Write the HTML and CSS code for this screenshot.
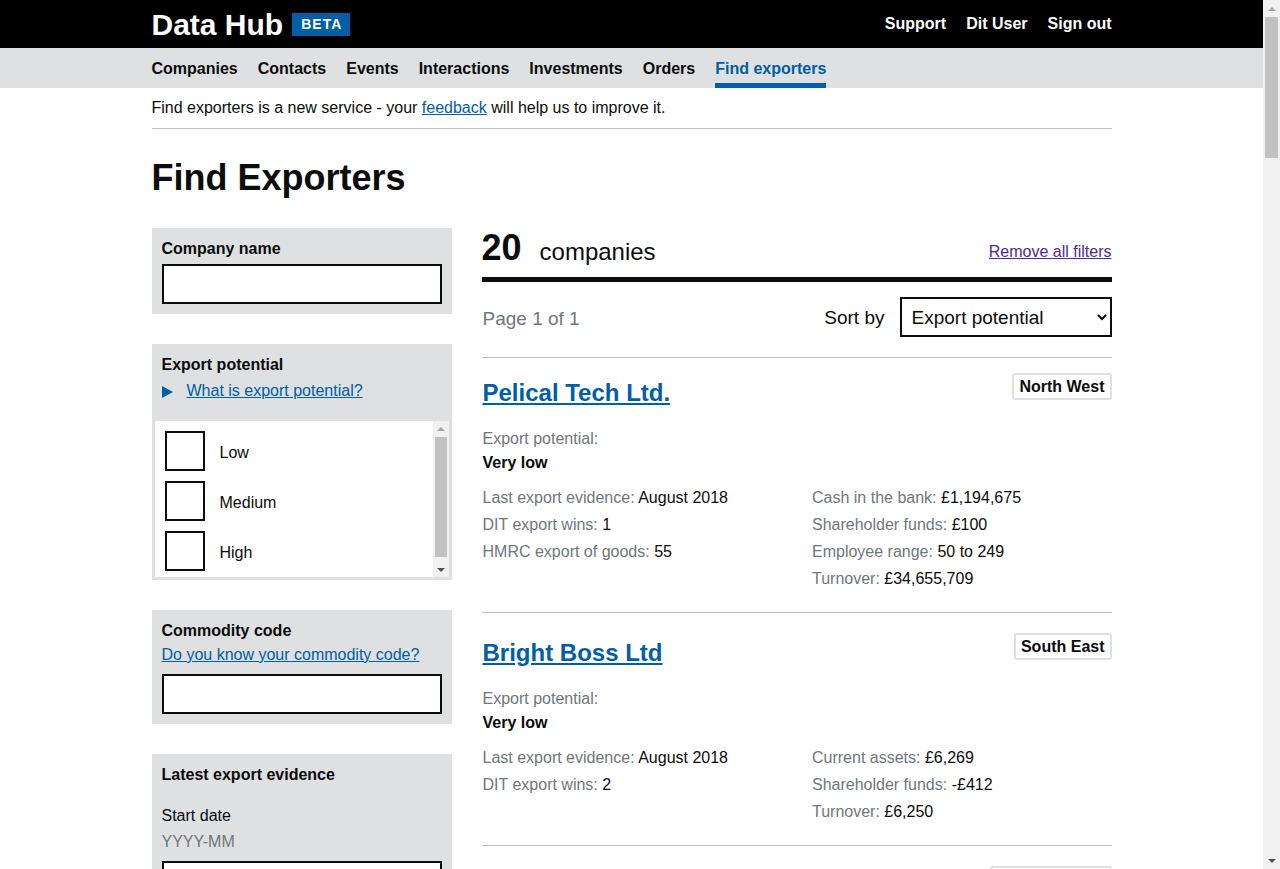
FILE: index.html
```html
<!DOCTYPE html>
<html lang="en">
<head>
<meta charset="utf-8">
<title>Find Exporters - Data Hub</title>
<link rel="stylesheet" href="styles.css">
</head>
<body>
<header class="site-header">
  <div class="container header-inner">
    <div class="brand">
      <a class="logo" href="#">Data Hub</a>
      <span class="beta">BETA</span>
    </div>
    <nav class="header-links">
      <a href="#">Support</a>
      <a href="#">Dit User</a>
      <a href="#">Sign out</a>
    </nav>
  </div>
</header>
<nav class="main-nav">
  <div class="container nav-inner">
    <a href="#">Companies</a>
    <a href="#">Contacts</a>
    <a href="#">Events</a>
    <a href="#">Interactions</a>
    <a href="#">Investments</a>
    <a href="#">Orders</a>
    <a href="#" class="active">Find exporters</a>
  </div>
</nav>
<main class="container">
  <p class="feedback">Find exporters is a new service - your <a href="#">feedback</a> will help us to improve it.</p>
  <h1 class="page-title">Find Exporters</h1>
  <div class="layout">
    <aside class="filters">
      <div class="filter">
        <label class="filter-label">Company name</label>
        <input class="text-input" type="text">
      </div>
      <div class="filter filter-options">
        <div class="filter-label">Export potential</div>
        <div class="summary">
          <svg class="triangle" width="11" height="12" viewBox="0 0 11 12"><polygon points="0,0 11,6 0,12" fill="#005ea5"/></svg>
          <a href="#">What is export potential?</a>
        </div>
        <div class="options">
          <div class="option-list">
            <label class="option"><input type="checkbox" class="checkbox"><span>Low</span></label>
            <label class="option"><input type="checkbox" class="checkbox"><span>Medium</span></label>
            <label class="option"><input type="checkbox" class="checkbox"><span>High</span></label>
          </div>
          <div class="mini-scrollbar" aria-hidden="true">
            <span class="sb-btn sb-up"></span>
            <span class="sb-track"><span class="sb-thumb mini-thumb"></span></span>
            <span class="sb-btn sb-down"></span>
          </div>
        </div>
      </div>
      <div class="filter">
        <div class="filter-label">Commodity code</div>
        <a class="filter-link" href="#">Do you know your commodity code?</a>
        <input class="text-input spaced" type="text">
      </div>
      <div class="filter">
        <div class="filter-label">Latest export evidence</div>
        <div class="date-label">Start date</div>
        <div class="hint">YYYY-MM</div>
        <input class="text-input spaced" type="text">
        <div class="date-label">End date</div>
        <div class="hint">YYYY-MM</div>
        <input class="text-input spaced" type="text">
      </div>
    </aside>
    <section class="results">
      <div class="results-header">
        <span class="count">20</span>
        <span class="count-label">companies</span>
        <a class="remove-filters" href="#">Remove all filters</a>
      </div>
      <div class="sort-row">
        <span class="page-info">Page 1 of 1</span>
        <div class="sort">
          <span class="sort-label">Sort by</span>
          <select class="sort-select">
            <option>Export potential</option>
            <option>Company name</option>
          </select>
        </div>
      </div>
      <div class="card-list">
        <article class="card">
          <div class="card-head">
            <a class="card-title" href="#">Pelical Tech Ltd.</a>
            <span class="badge">North West</span>
          </div>
          <div class="ep-label">Export potential:</div>
          <div class="ep-value">Very low</div>
          <div class="stats">
            <div class="stats-col">
              <div class="stat"><span class="k">Last export evidence:</span> August 2018</div>
              <div class="stat"><span class="k">DIT export wins:</span> 1</div>
              <div class="stat"><span class="k">HMRC export of goods:</span> 55</div>
            </div>
            <div class="stats-col">
              <div class="stat"><span class="k">Cash in the bank:</span> £1,194,675</div>
              <div class="stat"><span class="k">Shareholder funds:</span> £100</div>
              <div class="stat"><span class="k">Employee range:</span> 50 to 249</div>
              <div class="stat"><span class="k">Turnover:</span> £34,655,709</div>
            </div>
          </div>
        </article>
        <article class="card">
          <div class="card-head">
            <a class="card-title" href="#">Bright Boss Ltd</a>
            <span class="badge">South East</span>
          </div>
          <div class="ep-label">Export potential:</div>
          <div class="ep-value">Very low</div>
          <div class="stats">
            <div class="stats-col">
              <div class="stat"><span class="k">Last export evidence:</span> August 2018</div>
              <div class="stat"><span class="k">DIT export wins:</span> 2</div>
            </div>
            <div class="stats-col">
              <div class="stat"><span class="k">Current assets:</span> £6,269</div>
              <div class="stat"><span class="k">Shareholder funds:</span> -£412</div>
              <div class="stat"><span class="k">Turnover:</span> £6,250</div>
            </div>
          </div>
        </article>
        <article class="card">
          <div class="card-head">
            <a class="card-title" href="#">Marble Works Ltd</a>
            <span class="badge">East Midlands</span>
          </div>
          <div class="ep-label">Export potential:</div>
          <div class="ep-value">Low</div>
          <div class="stats">
            <div class="stats-col">
              <div class="stat"><span class="k">Last export evidence:</span> July 2018</div>
              <div class="stat"><span class="k">DIT export wins:</span> 1</div>
            </div>
            <div class="stats-col">
              <div class="stat"><span class="k">Shareholder funds:</span> £2,400</div>
              <div class="stat"><span class="k">Turnover:</span> £120,500</div>
            </div>
          </div>
        </article>
      </div>
    </section>
  </div>
</main>
<div class="page-scrollbar" aria-hidden="true">
  <span class="sb-btn sb-up"></span>
  <span class="sb-track"><span class="sb-thumb page-thumb"></span></span>
  <span class="sb-btn sb-down"></span>
</div>
</body>
</html>
```
FILE: styles.css
```css
* { box-sizing: border-box; }

body {
  margin: 0 17px 0 0;
  font-family: "Liberation Sans", Arial, sans-serif;
  font-size: 16px;
  color: #0b0c0c;
  background: #fff;
}

a { color: #005ea5; }

.container {
  width: 960px;
  margin: 0 auto;
}

/* Fake scrollbars */
.page-scrollbar {
  position: fixed;
  top: 0;
  right: 0;
  width: 17px;
  height: 100vh;
  background: #f1f1f1;
  display: flex;
  flex-direction: column;
}
.sb-btn {
  height: 17px;
  flex: none;
  display: flex;
  align-items: center;
  justify-content: center;
}
.sb-up::before {
  content: "";
  border-left: 4px solid transparent;
  border-right: 4px solid transparent;
  border-bottom: 4px solid #a3a3a3;
}
.sb-down::before {
  content: "";
  border-left: 4px solid transparent;
  border-right: 4px solid transparent;
  border-top: 4px solid #505050;
}
.sb-track {
  flex: 1;
  padding: 0 2px;
  display: flex;
  flex-direction: column;
}
.sb-thumb {
  display: block;
  background: #c1c1c1;
}
.page-thumb { height: 141px; }

.mini-scrollbar {
  width: 16px;
  flex: none;
  background: #f1f1f1;
  display: flex;
  flex-direction: column;
}
.mini-scrollbar .sb-btn { height: 15px; }
.mini-thumb {
  margin: 1px 0 0;
  height: 120px;
}

/* Header */
.site-header {
  background: #000;
  height: 48px;
}
.header-inner {
  height: 48px;
  display: flex;
  align-items: center;
  justify-content: space-between;
}
.brand {
  display: flex;
  align-items: center;
  padding-top: 1px;
}
.logo {
  color: #fff;
  font-weight: 700;
  font-size: 30px;
  line-height: 30px;
  text-decoration: none;
}
.beta {
  margin-left: 9px;
  background: #005ea5;
  color: #fff;
  font-weight: 700;
  font-size: 14px;
  letter-spacing: 1px;
  height: 23px;
  line-height: 23px;
  padding: 0 8px 0 9px;
}
.header-links {
  display: flex;
  gap: 20px;
  margin-top: -1px;
}
.header-links a {
  color: #fff;
  font-weight: 700;
  font-size: 16px;
  text-decoration: none;
}

/* Main nav */
.main-nav {
  background: #dee0e2;
  height: 40px;
}
.nav-inner {
  display: flex;
  gap: 20px;
}
.nav-inner a {
  color: #0b0c0c;
  font-weight: 700;
  font-size: 16px;
  line-height: 20px;
  text-decoration: none;
  padding: 11px 0 4px;
  border-bottom: 5px solid transparent;
}
.nav-inner a.active {
  color: #005ea5;
  border-bottom-color: #005ea5;
}

/* Feedback + title */
.feedback {
  margin: 0;
  padding: 10px 0 10px;
  line-height: 20px;
  border-bottom: 1px solid #bfc1c3;
}
.page-title {
  margin: 29px 0 0;
  font-size: 36px;
  line-height: 40px;
  font-weight: 700;
}

/* Layout */
.layout {
  margin-top: 30px;
  display: grid;
  grid-template-columns: 300px 630px;
  column-gap: 30px;
  align-items: start;
}

/* Filters */
.filter {
  background: #dee0e2;
  padding: 11px 10px 10px;
  margin-bottom: 30px;
}
.filter-label {
  display: block;
  font-weight: 700;
  line-height: 20px;
}
.text-input {
  display: block;
  width: 100%;
  height: 40px;
  margin-top: 5px;
  border: 2px solid #0b0c0c;
  background: #fff;
  border-radius: 0;
  font: inherit;
}
.text-input.spaced { margin-top: 9px; }

.filter-options { padding-bottom: 3px; }
.summary {
  margin-top: 6px;
  display: flex;
  align-items: center;
  line-height: 20px;
}
.triangle {
  margin-right: 14px;
  margin-top: 1px;
}
.options {
  margin: 20px -7px 0;
  height: 156px;
  overflow: hidden;
  background: #fff;
  display: flex;
}
.option-list {
  flex: 1;
  padding: 10px 10px 0;
}
.option {
  display: flex;
  align-items: center;
  margin-bottom: 10px;
}
.option span { margin-top: 4px; }
.checkbox {
  appearance: none;
  -webkit-appearance: none;
  width: 40px;
  height: 40px;
  margin: 0 15px 0 0;
  border: 2px solid #0b0c0c;
  background: #fff;
  border-radius: 0;
}
.filter-link {
  display: block;
  margin-top: 4px;
  line-height: 20px;
}
.date-label {
  margin-top: 21px;
  line-height: 20px;
}
.hint {
  margin-top: 6px;
  line-height: 20px;
  color: #6f777b;
}

/* Results */
.results-header {
  display: flex;
  align-items: baseline;
  padding-bottom: 9px;
  border-bottom: 5px solid #0b0c0c;
}
.count {
  font-size: 36px;
  line-height: 40px;
  font-weight: 700;
}
.count-label {
  margin-left: 18px;
  font-size: 24px;
}
.remove-filters {
  margin-left: auto;
  align-self: flex-end;
  margin-bottom: 7px;
  line-height: 18px;
  color: #4c2c92;
}
.sort-row {
  margin-top: 15px;
  padding-bottom: 20px;
  display: flex;
  align-items: center;
  justify-content: space-between;
  font-size: 19px;
}
.page-info { color: #6f777b; margin: 4px 0 0 1px; }
.sort {
  display: flex;
  align-items: center;
  gap: 15px;
}
.sort-label { margin-top: 1px; }
.sort-select {
  width: 212px;
  height: 40px;
  border: 2px solid #0b0c0c;
  border-radius: 0;
  background: #fff;
  color: #0b0c0c;
  font-family: "Liberation Sans", Arial, sans-serif;
  font-size: 19px;
  padding: 0 4px 0 6px;
}

.card-list { border-top: 1px solid #bfc1c3; }
.card {
  padding: 20px 0 20px 1px;
  border-bottom: 1px solid #bfc1c3;
}
.card:first-child { padding-top: 15px; }
.card-head {
  display: flex;
  justify-content: space-between;
  align-items: flex-start;
}
.card-title {
  margin-top: 5px;
  font-size: 24px;
  line-height: 30px;
  font-weight: 700;
}
.badge {
  border: 2px solid #dee0e2;
  border-radius: 3px;
  padding: 2px 5px;
  font-weight: 700;
  line-height: 19px;
}
.ep-label {
  margin-top: 19px;
  line-height: 24px;
  color: #6f777b;
}
.ep-value {
  line-height: 24px;
  font-weight: 700;
}
.stats {
  margin-top: 9px;
  display: grid;
  grid-template-columns: 1fr 1fr;
  column-gap: 30px;
}
.stat { line-height: 27px; }
.stat .k { color: #6f777b; }
```
